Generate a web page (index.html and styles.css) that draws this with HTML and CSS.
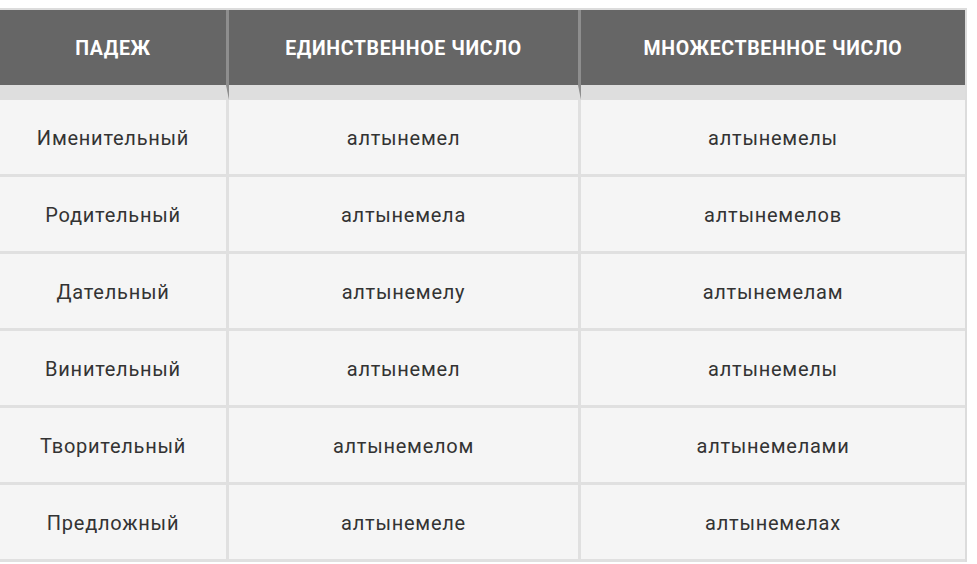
FILE: index.html
```html
<!DOCTYPE html>
<html lang="ru">
<head>
<meta charset="utf-8">
<link rel="stylesheet" href="styles.css">
</head>
<body>
<table class="decl">
  <thead>
    <tr>
      <th class="c1">Падеж</th>
      <th class="c2">Единственное число</th>
      <th class="c3">Множественное число</th>
    </tr>
  </thead>
  <tbody>
    <tr><td>Именительный</td><td>алтынемел</td><td>алтынемелы</td></tr>
    <tr><td>Родительный</td><td>алтынемела</td><td>алтынемелов</td></tr>
    <tr><td>Дательный</td><td>алтынемелу</td><td>алтынемелам</td></tr>
    <tr><td>Винительный</td><td>алтынемел</td><td>алтынемелы</td></tr>
    <tr><td>Творительный</td><td>алтынемелом</td><td>алтынемелами</td></tr>
    <tr><td>Предложный</td><td>алтынемеле</td><td>алтынемелах</td></tr>
  </tbody>
</table>
</body>
</html>
```

FILE: styles.css
```css
html, body {
  margin: 0;
  padding: 0;
  background: #ffffff;
}
body {
  padding-top: 8px;
  font-family: Roboto, "Noto Sans", sans-serif;
}
.decl {
  border-collapse: separate;
  border-spacing: 0;
  width: 967px;
  table-layout: fixed;
  border-top: 2px solid #dcdcdc;
  border-right: 2px solid #dcdcdc;
}
.decl th {
  background: #666666;
  color: #ffffff;
  font-weight: 700;
  font-size: 19.5px;
  letter-spacing: 0.65px;
  text-transform: uppercase;
  height: 73px;
  padding: 2px 0 0;
  box-sizing: content-box;
  border-bottom: 15px solid #dedede;
  vertical-align: middle;
  text-align: center;
}
.decl th.c1 { width: 226px; border-right: 3px solid #8e8e8e; }
.decl th.c2 { width: 349px; border-right: 3px solid #8e8e8e; }
.decl th.c3 { width: 384px; }
.decl td {
  background: #f5f5f5;
  color: #333333;
  font-size: 20px;
  letter-spacing: 0.75px;
  text-align: center;
  height: 72px;
  padding: 2px 0 0;
  box-sizing: content-box;
  border-bottom: 3px solid #e0e0e0;
  border-right: 3px solid #e0e0e0;
  vertical-align: middle;
}
.decl td:last-child {
  border-right: none;
}
```
